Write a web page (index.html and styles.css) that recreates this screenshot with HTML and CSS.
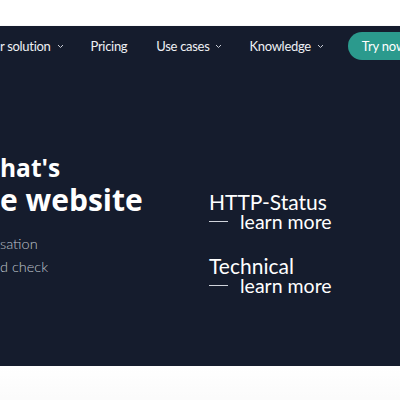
FILE: index.html
```html
<!DOCTYPE html>
<html>
<head>
    <title>Website check</title>
    <link rel="stylesheet" href="styles.css">
</head>
<body>
    <div class="page-top"></div>
    <div class="hero">
        <nav class="nav">
            <a class="nav-item" href="#">r solution<svg class="chev" width="7" height="5" viewBox="0 0 7 5"><path d="M1 1l2.5 2.5L6 1" fill="none" stroke="#c9cdd6" stroke-width="1"/></svg></a>
            <a class="nav-item pricing" href="#">Pricing</a>
            <a class="nav-item uses" href="#">Use cases<svg class="chev" width="7" height="5" viewBox="0 0 7 5"><path d="M1 1l2.5 2.5L6 1" fill="none" stroke="#c9cdd6" stroke-width="1"/></svg></a>
            <a class="nav-item know" href="#">Knowledge<svg class="chev" width="7" height="5" viewBox="0 0 7 5"><path d="M1 1l2.5 2.5L6 1" fill="none" stroke="#c9cdd6" stroke-width="1"/></svg></a>
            <a class="btn-try" href="#">Try now</a>
        </nav>

        <div class="hero-body">
            <div class="hero-left">
                <h1><span class="h1-small">hat's</span><span class="h1-big">e website</span></h1>
                <p class="lead">sation<br>d check</p>
            </div>
            <div class="hero-right">
                <div class="feature">
                    <h3>HTTP-Status</h3>
                    <a href="#" class="more"><span class="dash"></span>learn more</a>
                </div>
                <div class="feature">
                    <h3>Technical</h3>
                    <a href="#" class="more"><span class="dash"></span>learn more</a>
                </div>
            </div>
        </div>
    </div>
    <div class="below"></div>
</body>
</html>
```

FILE: styles.css
```css
body {
    margin: 0;
    background-color: #fff;
    font-family: Lato, "Open Sans", sans-serif;
    overflow: hidden;
}

.page-top {
    height: 26px;
}

.hero {
    height: 340px;
    background-color: #151c2d;
    color: #fff;
    box-shadow: 0 1px 2px rgba(40, 50, 70, 0.4);
    overflow: hidden;
}

.nav {
    display: flex;
    align-items: center;
    height: 28px;
    padding-top: 6px;
    white-space: nowrap;
}

.nav-item {
    display: flex;
    align-items: center;
    color: #eef0f4;
    text-decoration: none;
    font-size: 13px;
    letter-spacing: -0.3px;
}

.chev {
    margin-left: 6px;
    margin-top: 1px;
}

.pricing {
    margin-left: 27px;
}

.uses {
    margin-left: 29px;
}

.know {
    margin-left: 27px;
}

.btn-try {
    margin-left: 24px;
    display: flex;
    align-items: center;
    height: 28px;
    padding: 0 16px 0 14px;
    border-radius: 14px;
    background-color: #2b9a8d;
    color: #fff;
    text-decoration: none;
    font-size: 13px;
    letter-spacing: -0.2px;
}

.hero-body {
    display: flex;
    padding-top: 94px;
}

.hero-left {
    width: 209px;
}

h1 {
    margin: 0;
    font-family: "Open Sans", Lato, sans-serif;
    font-weight: 700;
}

.h1-small {
    display: block;
    font-size: 24.5px;
    line-height: 28px;
}

.h1-big {
    display: block;
    font-size: 30px;
    line-height: 36px;
}

.lead {
    margin: 14px 0 0;
    font-size: 14.5px;
    line-height: 23px;
    font-weight: 300;
    color: #bfc3cc;
}

.hero-right {
    padding-top: 38px;
}

.feature {
    margin-bottom: 25px;
}

h3 {
    margin: 0;
    font-size: 21px;
    line-height: 20px;
    font-weight: 400;
}

.more {
    display: flex;
    align-items: center;
    color: #fff;
    text-decoration: none;
    font-size: 19.5px;
    font-weight: 400;
    line-height: 19px;
}

.dash {
    width: 19px;
    height: 1px;
    margin-right: 12px;
    background-color: #d0d4dc;
}

.below {
    height: 40px;
    background: linear-gradient(#fff, #fafafa);
}
```
